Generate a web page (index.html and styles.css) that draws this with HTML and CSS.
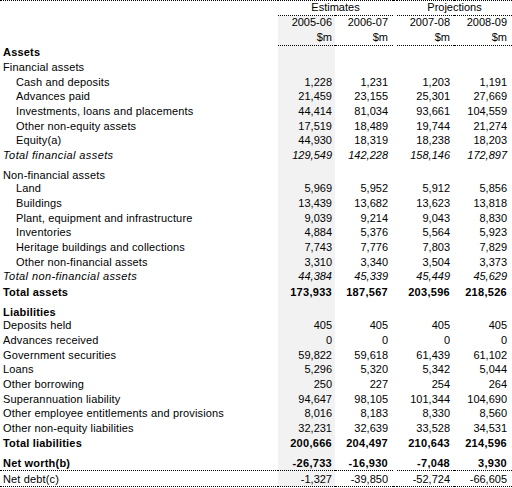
FILE: index.html
```html
<!DOCTYPE html>
<html lang="en">

<head>
    <meta charset="UTF-8" />
    <meta name="viewport" content="width=device-width, initial-scale=1.0" />
    <title>Balance sheet</title>
    <link rel="stylesheet" href="styles.css">
</head>

<body>
    <table class="balance">
        <colgroup>
            <col class="col-label">
            <col class="col-num">
            <col class="col-num2">
            <col class="col-gap">
            <col class="col-num">
            <col class="col-num2">
        </colgroup>
        <thead>
            <tr class="group">
                <th></th>
                <th colspan="2" class="span">Estimates</th>
                <th></th>
                <th colspan="2" class="span">Projections</th>
            </tr>
            <tr class="years">
                <th></th>
                <th>2005-06</th>
                <th>2006-07</th>
                <th></th>
                <th>2007-08</th>
                <th>2008-09</th>
            </tr>
            <tr class="units">
                <th></th>
                <th>$m</th>
                <th>$m</th>
                <th></th>
                <th>$m</th>
                <th>$m</th>
            </tr>
        </thead>
        <tbody>
            <tr class="bold"><td>Assets</td><td></td><td></td><td></td><td></td><td></td></tr>
            <tr><td>Financial assets</td><td></td><td></td><td></td><td></td><td></td></tr>
            <tr class="sub"><td>Cash and deposits</td><td>1,228</td><td>1,231</td><td></td><td>1,203</td><td>1,191</td></tr>
            <tr class="sub"><td>Advances paid</td><td>21,459</td><td>23,155</td><td></td><td>25,301</td><td>27,669</td></tr>
            <tr class="sub"><td>Investments, loans and placements</td><td>44,414</td><td>81,034</td><td></td><td>93,661</td><td>104,559</td></tr>
            <tr class="sub"><td>Other non-equity assets</td><td>17,519</td><td>18,489</td><td></td><td>19,744</td><td>21,274</td></tr>
            <tr class="sub"><td>Equity(a)</td><td>44,930</td><td>18,319</td><td></td><td>18,238</td><td>18,203</td></tr>
            <tr class="italic"><td>Total financial assets</td><td>129,549</td><td>142,228</td><td></td><td>158,146</td><td>172,897</td></tr>
            <tr class="break"><td>Non-financial assets</td><td></td><td></td><td></td><td></td><td></td></tr>
            <tr class="sub"><td>Land</td><td>5,969</td><td>5,952</td><td></td><td>5,912</td><td>5,856</td></tr>
            <tr class="sub"><td>Buildings</td><td>13,439</td><td>13,682</td><td></td><td>13,623</td><td>13,818</td></tr>
            <tr class="sub"><td>Plant, equipment and infrastructure</td><td>9,039</td><td>9,214</td><td></td><td>9,043</td><td>8,830</td></tr>
            <tr class="sub"><td>Inventories</td><td>4,884</td><td>5,376</td><td></td><td>5,564</td><td>5,923</td></tr>
            <tr class="sub"><td>Heritage buildings and collections</td><td>7,743</td><td>7,776</td><td></td><td>7,803</td><td>7,829</td></tr>
            <tr class="sub"><td>Other non-financial assets</td><td>3,310</td><td>3,340</td><td></td><td>3,504</td><td>3,373</td></tr>
            <tr class="italic"><td>Total non-financial assets</td><td>44,384</td><td>45,339</td><td></td><td>45,449</td><td>45,629</td></tr>
            <tr class="bold total"><td>Total assets</td><td>173,933</td><td>187,567</td><td></td><td>203,596</td><td>218,526</td></tr>
            <tr class="bold break"><td>Liabilities</td><td></td><td></td><td></td><td></td><td></td></tr>
            <tr><td>Deposits held</td><td>405</td><td>405</td><td></td><td>405</td><td>405</td></tr>
            <tr><td>Advances received</td><td>0</td><td>0</td><td></td><td>0</td><td>0</td></tr>
            <tr><td>Government securities</td><td>59,822</td><td>59,618</td><td></td><td>61,439</td><td>61,102</td></tr>
            <tr><td>Loans</td><td>5,296</td><td>5,320</td><td></td><td>5,342</td><td>5,044</td></tr>
            <tr><td>Other borrowing</td><td>250</td><td>227</td><td></td><td>254</td><td>264</td></tr>
            <tr><td>Superannuation liability</td><td>94,647</td><td>98,105</td><td></td><td>101,344</td><td>104,690</td></tr>
            <tr><td>Other employee entitlements and provisions</td><td>8,016</td><td>8,183</td><td></td><td>8,330</td><td>8,560</td></tr>
            <tr><td>Other non-equity liabilities</td><td>32,231</td><td>32,639</td><td></td><td>33,528</td><td>34,531</td></tr>
            <tr class="bold"><td>Total liabilities</td><td>200,666</td><td>204,497</td><td></td><td>210,643</td><td>214,596</td></tr>
            <tr class="bold worth"><td>Net worth(b)</td><td>-26,733</td><td>-16,930</td><td></td><td>-7,048</td><td>3,930</td></tr>
            <tr class="debt"><td>Net debt(c)</td><td>-1,327</td><td>-39,850</td><td></td><td>-52,724</td><td>-66,605</td></tr>
        </tbody>
    </table>
</body>

</html>
```

FILE: styles.css
```css
body {
    margin: 0;
    background: #fff;
    color: #000;
    font-family: "Liberation Sans", Arial, sans-serif;
    font-size: 11px;
}

.balance {
    width: 512px;
    table-layout: fixed;
    border-collapse: collapse;
}

.col-label {
    width: 278px;
}

.col-num {
    width: 57px;
}

.col-num2 {
    width: 58px;
}

.col-gap {
    width: 4px;
}

.balance th,
.balance td {
    padding: 0 5px 1px 0;
    height: 13.68px;
    line-height: 13px;
    text-align: right;
    font-weight: normal;
    white-space: nowrap;
    vertical-align: middle;
}

.balance th:nth-child(2),
.balance td:nth-child(2) {
    padding-right: 3px;
}

.balance th:nth-child(5),
.balance td:nth-child(5) {
    padding-right: 4px;
}

.balance th:nth-child(4),
.balance td:nth-child(4) {
    padding: 0;
}

.balance td:first-child {
    text-align: left;
    padding-left: 3px;
    letter-spacing: 0.15px;
}

/* header */
.group th {
    height: 13px;
    border-top: 1px dotted #000;
}

.group th.span {
    text-align: center;
    padding: 0 0 1px;
    border-bottom: 1px dotted #000;
}

.years th {
    height: 13px;
}

.units th {
    height: 14px;
    border-bottom: 1px dotted #000;
}

.units th:first-child,
.units th:nth-child(4) {
    border-bottom: none;
}

.years th:nth-child(2),
.units th:nth-child(2),
.balance tbody td:nth-child(2) {
    background: #f2f2f2;
}

/* body rows */
.sub td:first-child {
    padding-left: 16px;
}

.italic td {
    font-style: italic;
}

.italic td:first-child {
    letter-spacing: 0.4px;
}

.bold td {
    font-weight: bold;
    letter-spacing: 0.3px;
}

.bold td:first-child {
    letter-spacing: 0.2px;
}

.break td {
    height: 18.6px;
    padding-bottom: 0;
    vertical-align: bottom;
}

.total td {
    height: 14.6px;
    vertical-align: bottom;
}

.worth td {
    height: 19px;
    padding-bottom: 0;
    vertical-align: bottom;
    border-bottom: 1px dotted #000;
}

.worth td:nth-child(4) {
    border-bottom: none;
}

.debt td {
    height: 15.5px;
    padding-bottom: 0;
    vertical-align: bottom;
    border-bottom: 1px dotted #000;
}
```
